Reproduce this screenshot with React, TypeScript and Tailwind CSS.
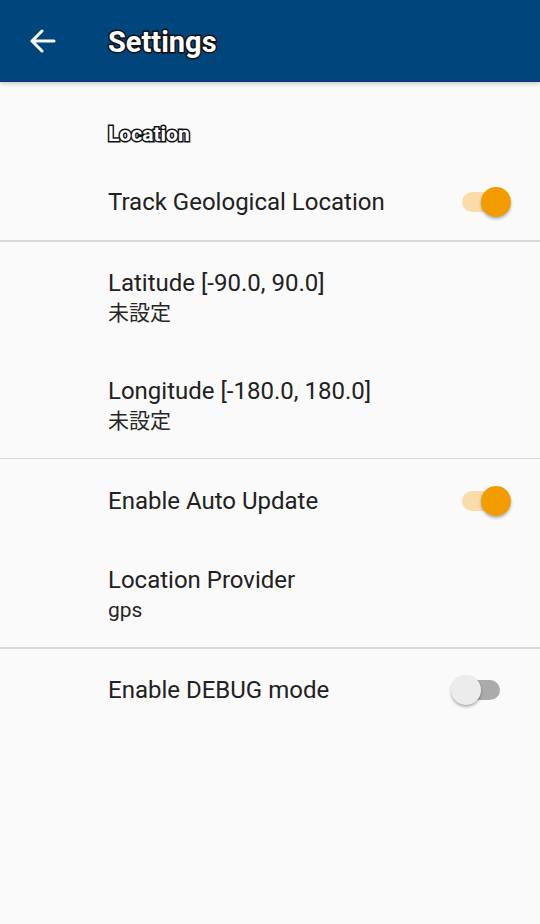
import React from "react";

type Row =
  | { kind: "switch"; title: string; on: boolean }
  | { kind: "text"; title: string; summary: string };

const groups: Row[][] = [
  [{ kind: "switch", title: "Track Geological Location", on: true }],
  [
    { kind: "text", title: "Latitude [-90.0, 90.0]", summary: "未設定" },
    { kind: "text", title: "Longitude [-180.0, 180.0]", summary: "未設定" },
  ],
  [
    { kind: "switch", title: "Enable Auto Update", on: true },
    { kind: "text", title: "Location Provider", summary: "gps" },
  ],
  [{ kind: "switch", title: "Enable DEBUG mode", on: false }],
];

function Toggle({ on }: { on: boolean }) {
  return (
    <div
      className={`relative h-[20px] w-[38px] rounded-full ${
        on ? "bg-[#f9dcaa]" : "bg-[#ababab]"
      }`}
    >
      <div
        className={`absolute top-[-5px] h-[30px] w-[30px] rounded-full shadow-[0_2px_3px_rgba(0,0,0,0.3)] ${
          on ? "left-[19px] bg-[#f29c00]" : "left-[-11px] bg-[#ececec]"
        }`}
      />
    </div>
  );
}

function PrefRow({ row }: { row: Row }) {
  if (row.kind === "switch") {
    return (
      <div className="flex h-[80px] items-center justify-between pt-[3px] pl-[108px] pr-[40px]">
        <span className="text-[24px] leading-[30px] text-[#212121]">{row.title}</span>
        <Toggle on={row.on} />
      </div>
    );
  }
  return (
    <div className="flex h-[108px] flex-col justify-center pt-[2px] pl-[108px] pr-[40px]">
      <span className="text-[24px] leading-[32px] text-[#212121]">{row.title}</span>
      <span className="text-[21px] leading-[28px] text-[#262626]">{row.summary}</span>
    </div>
  );
}

export default function App() {
  return (
    <div
      className="flex min-h-[924px] w-[540px] flex-col bg-[#fafafa]"
      style={{ fontFamily: 'Roboto, "Noto Sans CJK JP", sans-serif' }}
    >
      <header className="relative z-10 flex h-[82px] items-center border-b border-[#1c2b7e] bg-[#00457c] shadow-[0_2px_4px_rgba(0,0,0,0.18)]">
        <div className="flex w-[108px] justify-start pl-[29px]">
          <svg width="27" height="24" viewBox="0 0 27 24" fill="none">
            <path
              d="M25 12H3M13 2L3 12l10 10"
              stroke="white"
              strokeWidth="3"
              strokeLinecap="round"
              strokeLinejoin="round"
            />
          </svg>
        </div>
        <h1 className="pt-[4px] text-[29px] font-bold text-white [-webkit-text-stroke:3px_#111] [paint-order:stroke_fill]">
          Settings
        </h1>
      </header>

      <div className="flex h-[78px] items-end pb-[12px] pl-[108px]">
        <span className="text-[21px] font-bold leading-[28px] text-white [-webkit-text-stroke:3px_#111] [paint-order:stroke_fill]">
          Location
        </span>
      </div>

      {groups.map((g, i) => (
        <div key={i}>
          {i > 0 && <div className="h-[1.5px] bg-[#d9d9d9]" />}
          {g.map((r) => (
            <PrefRow key={r.title} row={r} />
          ))}
        </div>
      ))}
    </div>
  );
}
